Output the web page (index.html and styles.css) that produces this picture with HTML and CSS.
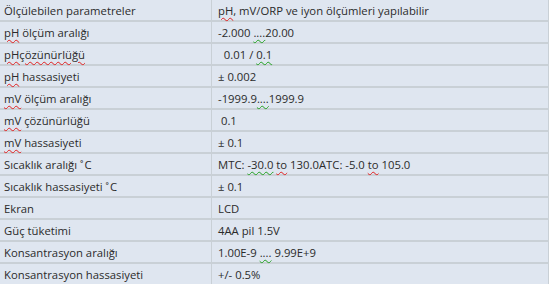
FILE: index.html
```html
<!DOCTYPE html>
<html lang="tr">
<head>
<meta charset="utf-8">
<link rel="stylesheet" href="styles.css">
</head>
<body>
<table class="spec">
<tr><td class="k">Ölçülebilen parametreler</td><td class="v"><span class="sr">pH</span>, mV/ORP ve iyon ölçümleri yapılabilir</td></tr>
<tr><td class="k"><span class="sr">pH</span> ölçüm aralığı</td><td class="v">-2.000 <span class="sg">....</span>20.00</td></tr>
<tr><td class="k"><span class="sr">pHçözünürlüğü</span></td><td class="v">&nbsp; 0.01 / <span class="sg">0.1</span></td></tr>
<tr><td class="k"><span class="sr">pH</span> hassasiyeti</td><td class="v">± 0.002</td></tr>
<tr><td class="k"><span class="sr">mV</span> ölçüm aralığı</td><td class="v">-1999.9<span class="sg">....</span>1999.9</td></tr>
<tr><td class="k"><span class="sr">mV</span> çözünürlüğü</td><td class="v">&nbsp;0.1</td></tr>
<tr><td class="k"><span class="sr">mV</span> hassasiyeti</td><td class="v">± 0.1</td></tr>
<tr><td class="k">Sıcaklık aralığı ˚&#8202;C</td><td class="v">MTC: <span class="sg">-30.0</span> <span class="sr">to</span> 130.0ATC: -5.0 <span class="sr">to</span> 105.0</td></tr>
<tr><td class="k">Sıcaklık hassasiyeti ˚&#8202;C</td><td class="v">± 0.1</td></tr>
<tr><td class="k">Ekran</td><td class="v">LCD</td></tr>
<tr><td class="k">Güç tüketimi</td><td class="v">4AA pil 1.5V</td></tr>
<tr><td class="k">Konsantrasyon aralığı</td><td class="v">1.00E-9 <span class="sg">....</span> 9.99E+9</td></tr>
<tr><td class="k">Konsantrasyon hassasiyeti</td><td class="v">+/- 0.5%</td></tr>
</table>
</body>
</html>
```
FILE: styles.css
```css
html, body {
  margin: 0;
  padding: 0;
  background: #ffffff;
}
.spec {
  width: 549px;
  border-collapse: collapse;
  background: #dfe6f0;
  font-family: "Open Sans", "Noto Sans", sans-serif;
  font-size: 11.3px;
  color: #2b2b2b;
  border-right: 1px solid #c9d0d6;
}
.spec td {
  height: 20px;
  padding: 0 0 0 5px;
  border-bottom: 2px solid #c9d0d6;
  vertical-align: middle;
  white-space: nowrap;
}
.spec tr:last-child td {
  border-bottom: none;
}
.spec .k {
  width: 207px;
  padding-left: 4px;
  border-right: 1px solid #c9d0d6;
}
.spec .v {
  padding-left: 6px;
}
.sr {
  text-decoration: underline wavy #e02020;
  text-decoration-thickness: 1px;
  text-underline-offset: 2px;
}
.sg {
  text-decoration: underline wavy #20a020;
  text-decoration-thickness: 1px;
  text-underline-offset: 2px;
}
```
